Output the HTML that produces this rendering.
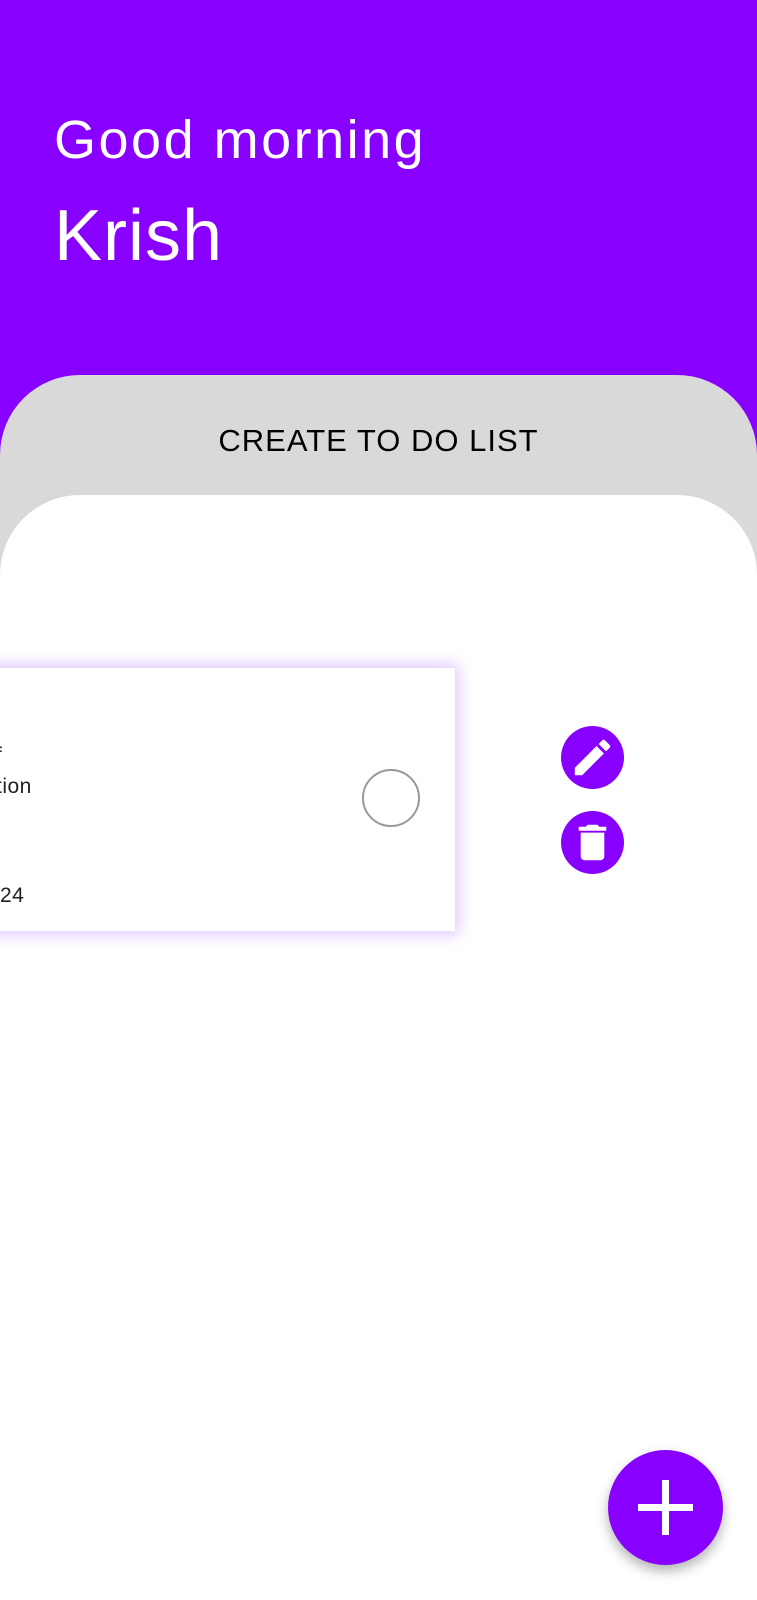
<!DOCTYPE html>
<html><head><style>
*{margin:0;padding:0;box-sizing:border-box}
body{width:757px;height:1600px;overflow:hidden;background:#fff;font-family:"Liberation Sans",sans-serif;position:relative}
.hdr{position:absolute;left:0;top:0;width:757px;height:500px;background:#8800ff}
.t1{position:absolute;left:54px;top:108px;font-size:54px;color:#fff;line-height:64px;letter-spacing:2.5px}
.t2{position:absolute;left:54px;top:196px;font-size:72px;color:#fff;line-height:80px;letter-spacing:1px}
.gray{position:absolute;left:0;top:375px;width:757px;height:300px;background:#d9d9d9;border-radius:80px 80px 0 0}
.ct{position:absolute;left:0;width:757px;top:421px;text-align:center;font-size:31px;line-height:40px;color:#000;letter-spacing:1px}
.white{position:absolute;left:0;top:495px;width:757px;height:1105px;background:#fff;border-radius:80px 80px 0 0}
.card{position:absolute;left:-20px;top:668px;width:475px;height:263px;background:#fff;box-shadow:0 0 14px 4px rgba(170,100,255,.35)}
.tx{position:absolute;font-size:21px;color:#222;line-height:24px;letter-spacing:.5px}
.chk{position:absolute;left:362px;top:769px;width:58px;height:58px;border:2px solid #999;border-radius:50%}
.btn{position:absolute;width:63px;height:63px;border-radius:50%;background:#8800ff}
.fab{position:absolute;left:608px;top:1450px;width:115px;height:115px;border-radius:50%;background:#8800ff;box-shadow:0 6px 12px rgba(0,0,0,.3)}
</style></head><body>
<div class="hdr"></div>
<div class="t1">Good morning</div>
<div class="t2">Krish</div>
<div class="gray"></div>
<div class="ct">CREATE TO DO LIST</div>
<div class="white"></div>
<div class="card"></div>
<div class="tx" style="left:-4px;top:744px">f</div>
<div class="tx" style="left:-4px;top:775px">tion</div>
<div class="tx" style="left:0px;top:884px">24</div>
<div class="chk"></div>
<div class="btn" style="left:561px;top:726px"><svg width="63" height="63" viewBox="0 0 24 24"><g transform="translate(3 3) scale(.75)"><path fill="#fff" d="M3 17.25V21h3.75L17.81 9.94l-3.75-3.75L3 17.25zM20.71 7.04a1 1 0 0 0 0-1.41l-2.34-2.34a1 1 0 0 0-1.41 0l-1.83 1.83 3.75 3.75 1.83-1.83z"/></g></svg></div>
<div class="btn" style="left:561px;top:811px"><svg width="63" height="63" viewBox="0 0 24 24"><g transform="translate(3 3) scale(.75)"><path fill="#fff" d="M6 19c0 1.1.9 2 2 2h8c1.1 0 2-.9 2-2V7H6v12zM19 4h-3.5l-1-1h-5l-1 1H5v2h14V4z"/></g></svg></div>
<div class="fab"><svg width="115" height="115" viewBox="0 0 115 115"><rect x="54" y="30" width="7" height="55" fill="#fff"/><rect x="30" y="54" width="55" height="7" fill="#fff"/></svg></div>
</body></html>
